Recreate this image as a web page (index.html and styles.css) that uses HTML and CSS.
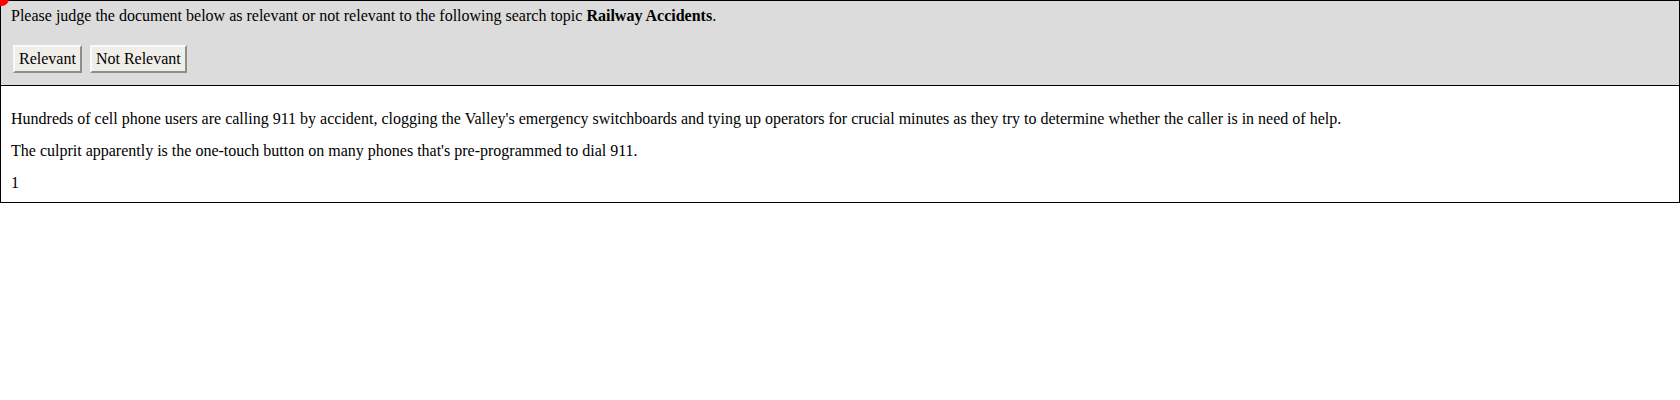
FILE: index.html
```html
<!DOCTYPE html>
<html>
<head>
<meta charset="utf-8">
<link rel="stylesheet" href="styles.css">
</head>
<body>
<div class="dot"></div>
<div class="judge">
  <div class="prompt">Please judge the document below as relevant or not relevant to the following search topic <b>Railway Accidents</b>.</div>
  <div class="actions">
    <button class="btn">Relevant</button>
    <button class="btn">Not Relevant</button>
  </div>
</div>
<div class="doc">
  <p>Hundreds of cell phone users are calling 911 by accident, clogging the Valley's emergency switchboards and tying up operators for crucial minutes as they try to determine whether the caller is in need of help.</p>
  <p>The culprit apparently is the one-touch button on many phones that's pre-programmed to dial 911.</p>
  <p>1</p>
</div>
</body>
</html>
```
FILE: styles.css
```css
html, body {
  margin: 0;
  padding: 0;
  background: #fff;
}
body {
  font-family: "Liberation Serif", "Times New Roman", serif;
  font-size: 16px;
  color: #000;
  position: relative;
}
.dot {
  position: absolute;
  left: -6px;
  top: -9px;
  width: 15px;
  height: 15px;
  border-radius: 50%;
  background: #f00;
  z-index: 2;
}
.judge {
  background: #dcdcdc;
  border: 1px solid #000;
  padding: 6px 10px 12px 10px;
}
.prompt {
  line-height: 18px;
}
.actions {
  display: flex;
  gap: 8px;
  margin-top: 20px;
  padding-left: 2px;
}
.btn {
  font-family: "Liberation Serif", "Times New Roman", serif;
  font-size: 16px;
  color: #000;
  background: #f0eee9;
  border: 2px solid;
  border-top-color: #fbfaf8;
  border-left-color: #fbfaf8;
  border-right-color: #8e8d8a;
  border-bottom-color: #8e8d8a;
  padding: 3px 4px;
  height: 28px;
  line-height: 18px;
  margin: 0;
}
.doc {
  border: 1px solid #000;
  border-top: none;
  padding: 10px 10px 0 10px;
}
.doc p {
  margin: 14px 0;
  line-height: 18px;
}
.doc p:last-child {
  margin-bottom: 10px;
}
```
